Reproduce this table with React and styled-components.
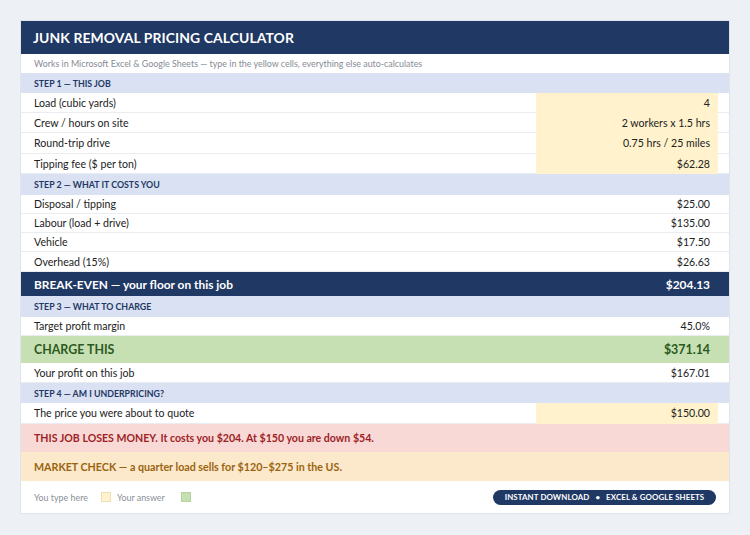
import React from 'react';
import styled, { createGlobalStyle } from 'styled-components';

const navy = '#1f3864';
const font = "Lato, 'Open Sans', sans-serif";

const GlobalStyle = createGlobalStyle`
  html, body {
    margin: 0;
    padding: 0;
    background: #edf0f5;
    font-family: ${font};
  }
`;

const Page = styled.div`
  padding: 21px;
  background: #edf0f5;
  min-height: 535px;
  box-sizing: border-box;
`;
const Card = styled.div`
  width: 708px;
  background: #fff;
  box-shadow: 0 0 0 1px #dfe4ec;
`;
const Header = styled.div`
  height: 33px;
  background: ${navy};
  color: #fff;
  display: flex;
  align-items: center;
  padding-left: 12px;
  font-size: 13.9px;
  font-weight: 700;
  letter-spacing: 0.1px;
`;
const Subtitle = styled.div`
  height: 19px;
  display: flex;
  align-items: center;
  padding-left: 13px;
  font-size: 8.9px;
  color: #868b94;
`;
const Step = styled.div`
  height: ${props => props.h || 20}px;
  background: #d9e1f2;
  display: flex;
  align-items: center;
  padding-left: 13px;
  font-size: 8.8px;
  font-weight: 700;
  color: ${navy};
`;
const Row = styled.div`
  display: grid;
  grid-template-columns: 1fr 182px 11px;
  height: ${props => props.h || 20}px;
  font-size: 10.6px;
  color: #222;
`;
const Label = styled.div`
  display: flex;
  align-items: center;
  padding-left: 13px;
  border-bottom: 1px solid #e9ecf1;
`;
const Value = styled.div`
  display: flex;
  align-items: center;
  justify-content: flex-end;
  padding-right: 8px;
  background: ${props => (props.input ? '#fff2cc' : 'transparent')};
  border-bottom: 1px solid ${props => (props.input ? '#fff2cc' : '#e9ecf1')};
`;
const Gap = styled.div`
  border-bottom: 1px solid #e9ecf1;
`;
const Total = styled.div`
  display: flex;
  align-items: center;
  justify-content: space-between;
  height: ${props => props.h}px;
  padding: 0 19px 0 13px;
  background: ${props => props.bg};
  color: ${props => props.fg};
  font-size: ${props => props.size}px;
  font-weight: 700;
`;
const Notice = styled.div`
  display: flex;
  align-items: center;
  height: ${props => props.h}px;
  padding-left: 13px;
  background: ${props => props.bg};
  color: ${props => props.fg};
  font-size: ${props => props.size}px;
  font-weight: 700;
`;
const Legend = styled.div`
  height: 32px;
  display: flex;
  align-items: center;
  padding: 0 13px 0 13px;
  font-size: 8.9px;
  color: #8a8f98;
`;
const Swatch = styled.span`
  width: 10px;
  height: 10px;
  margin: 0 6px 0 ${props => props.gap}px;
  background: ${props => props.color};
  border: 1px solid ${props => props.edge};
  box-sizing: border-box;
`;
const Badge = styled.div`
  margin-left: auto;
  height: 15px;
  width: 223px;
  border-radius: 8px;
  background: ${navy};
  color: #fff;
  font-size: 7.9px;
  font-weight: 700;
  display: flex;
  align-items: center;
  justify-content: center;
  gap: 6px;
  letter-spacing: 0.1px;
`;

const LineItem = ({ label, value, input, h }) => (
  <Row h={h}>
    <Label>{label}</Label>
    <Value input={input}>{value}</Value>
    <Gap />
  </Row>
);

export default function App() {
  return (
    <Page>
      <GlobalStyle />
      <Card>
        <Header>JUNK REMOVAL PRICING CALCULATOR</Header>
        <Subtitle>
          Works in Microsoft Excel &amp; Google Sheets — type in the yellow cells, everything else auto-calculates
        </Subtitle>

        <Step>STEP 1 — THIS JOB</Step>
        <LineItem label="Load (cubic yards)" value="4" input />
        <LineItem label="Crew / hours on site" value="2 workers x 1.5 hrs" input />
        <LineItem label="Round-trip drive" value="0.75 hrs / 25 miles" input h={21} />
        <LineItem label="Tipping fee ($ per ton)" value="$62.28" input />

        <Step h={21}>STEP 2 — WHAT IT COSTS YOU</Step>
        <LineItem label="Disposal / tipping" value="$25.00" h={19} />
        <LineItem label="Labour (load + drive)" value="$135.00" h={19} />
        <LineItem label="Vehicle" value="$17.50" h={19} />
        <LineItem label="Overhead (15%)" value="$26.63" h={20} />

        <Total h={24} bg={navy} fg="#fff" size={11.9}>
          <span>BREAK-EVEN — your floor on this job</span>
          <span>$204.13</span>
        </Total>

        <Step h={21}>STEP 3 — WHAT TO CHARGE</Step>
        <LineItem label="Target profit margin" value="45.0%" h={19} />
        <Total h={27} bg="#c6e0b4" fg="#2c5a1c" size={12.4}>
          <span>CHARGE THIS</span>
          <span>$371.14</span>
        </Total>
        <LineItem label="Your profit on this job" value="$167.01" />

        <Step>STEP 4 — AM I UNDERPRICING?</Step>
        <LineItem label="The price you were about to quote" value="$150.00" input h={21} />

        <Notice h={28} bg="#f8d9d6" fg="#9e1f26" size={10.6}>
          THIS JOB LOSES MONEY. It costs you $204. At $150 you are down $54.
        </Notice>
        <Notice h={29} bg="#fce8cb" fg="#9a640e" size={10.7}>
          MARKET CHECK — a quarter load sells for $120–$275 in the US.
        </Notice>

        <Legend>
          You type here
          <Swatch gap={13} color="#fff2cc" edge="#eadfb8" />
          Your answer
          <Swatch gap={16} color="#c6e0b4" edge="#b5d3a0" />
          <Badge>
            <span>INSTANT DOWNLOAD</span>
            <span>•</span>
            <span>EXCEL &amp; GOOGLE SHEETS</span>
          </Badge>
        </Legend>
      </Card>
    </Page>
  );
}
